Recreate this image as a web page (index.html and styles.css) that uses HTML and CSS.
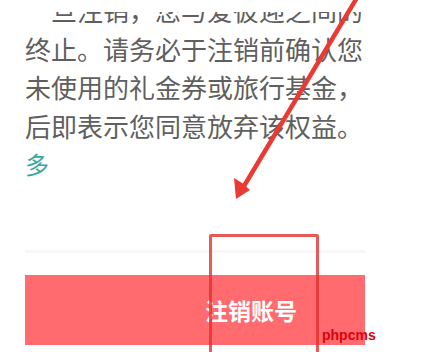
FILE: index.html
```html
<!DOCTYPE html>
<html lang="zh-CN">
<head>
<meta charset="utf-8">
<link rel="stylesheet" href="styles.css">
</head>
<body>
<div class="page">
  <div class="content">
    <div class="notice">
      <div class="line first">一旦注销，您与爱彼迎之间的</div>
      <div class="line">终止。请务必于注销前确认您</div>
      <div class="line">未使用的礼金券或旅行基金，</div>
      <div class="line">后即表示您同意放弃该权益。</div>
      <div class="line more">多</div>
    </div>
    <div class="divider"></div>
    <div class="btn"><span class="btn-text">注销账号</span></div>
  </div>
  <div class="highlight"></div>
  <svg class="arrow" width="428" height="352" viewBox="0 0 428 352">
    <line x1="358" y1="-4" x2="244" y2="186" stroke="#ea3a33" stroke-width="4.5" stroke-linecap="round"/>
    <polygon points="236,199 234,178 242,183 250,190" fill="#ea3a33"/>
  </svg>
  <div class="watermark">phpcms</div>
</div>
</body>
</html>
```
FILE: styles.css
```css
html, body {
  margin: 0;
  padding: 0;
  background: #ffffff;
}
.page {
  position: relative;
  width: 428px;
  height: 352px;
  overflow: hidden;
  background: #ffffff;
}
.content {
  width: 340px;
  padding-left: 25px;
  display: flex;
  flex-direction: column;
}
.notice {
  margin-top: -9px;
  font-family: "Noto Sans CJK SC", "Noto Sans", sans-serif;
  font-size: 26px;
  line-height: 38.5px;
  color: #5f5f5f;
  white-space: nowrap;
  overflow: hidden;
}
.line.first {
  clip-path: inset(21px 0 0 0);
}
.line.more {
  color: #3ba7a2;
  font-size: 24px;
}
.divider {
  margin-top: 66px;
  height: 3px;
  background: #f7f7f7;
}
.btn {
  margin-top: 22px;
  height: 70px;
  background: #ff6b6f;
  display: flex;
  align-items: center;
  padding-left: 180px;
}
.btn-text {
  font-family: "Noto Sans CJK SC", "Noto Sans", sans-serif;
  font-weight: bold;
  font-size: 23px;
  color: #ffffff;
}
.highlight {
  position: absolute;
  left: 209px;
  top: 234px;
  width: 104px;
  height: 120px;
  border: 3px solid rgba(225, 50, 45, 0.8);
  border-radius: 2px;
}
.arrow {
  position: absolute;
  left: 0;
  top: 0;
}
.watermark {
  position: absolute;
  left: 322px;
  top: 327px;
  font-family: "Liberation Sans", Arial, sans-serif;
  font-size: 14px;
  font-weight: bold;
  color: #e0000c;
}
```
